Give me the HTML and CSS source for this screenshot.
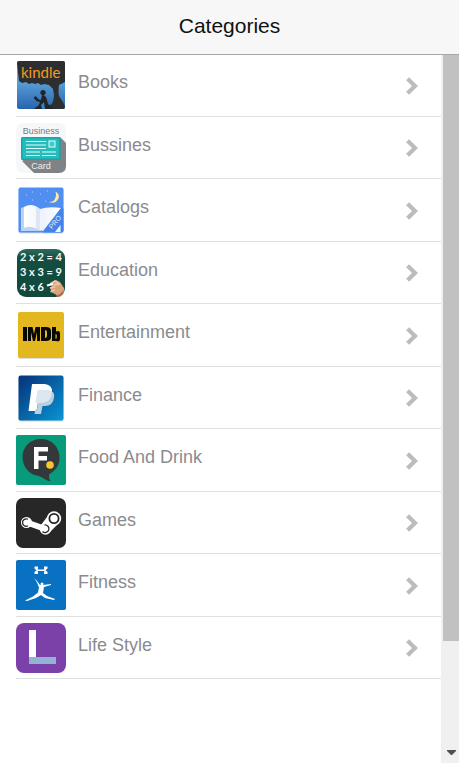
FILE: index.html
```html
<!DOCTYPE html>
<html lang="en">
<head>
<meta charset="utf-8">
<meta name="viewport" content="width=device-width, initial-scale=1">
<title>Categories</title>
<link rel="stylesheet" href="styles.css">
</head>
<body>
<svg class="defs" aria-hidden="true">
  <defs>
    <linearGradient id="dusk" x1="0" y1="0" x2="0" y2="1"><stop offset="0.35" stop-color="#61a7df"/><stop offset="1" stop-color="#2764ad"/></linearGradient>
    <linearGradient id="board" x1="0" y1="0" x2="0" y2="1"><stop offset="0" stop-color="#2c6b5c"/><stop offset="0.2" stop-color="#164d41"/><stop offset="1" stop-color="#10483c"/></linearGradient>
    <linearGradient id="pay" x1="0" y1="0" x2="1" y2="1"><stop offset="0.1" stop-color="#073a80"/><stop offset="1" stop-color="#0896d5"/></linearGradient>
    <linearGradient id="page" x1="0" y1="0" x2="1" y2="0"><stop offset="0" stop-color="#ffffff"/><stop offset="0.5" stop-color="#eef2fa"/><stop offset="1" stop-color="#ffffff"/></linearGradient>
    <symbol id="chevron" viewBox="0 0 12 18"><path d="M1.600 1.700 L9 9 L1.600 16.300" fill="none" stroke="#bcbcbc" stroke-width="4.200"/></symbol>
  </defs>
</svg>
<header class="bar"><h1 class="bar-title">Categories</h1></header>
<div class="view">
  <main class="content">
    <ul class="list">
      <li class="item"><a class="link" href="#books">
        <svg class="icon" viewBox="0 0 50 50" aria-hidden="true">
          <rect x="1" y="1" width="48" height="48" rx="2" fill="url(#dusk)"/>
          <path d="M1 3q0-2 2-2h44q2 0 2 2v19l-4 2-2 1q-1 7 0 11l5 8 1 3q0 2-2 2H27q0-2 4-3l5-2q2-4 2-9l-1-6-4-4-5-1-3 1-3-2-3 1-3-1-3 1-3-2-4 1-3-2z" fill="#2c2e2f"/>
          <circle cx="27" cy="32.500" r="2.600" fill="#20252a"/>
          <path d="M26 35q4 0 5 5l1 4 5 5H18l5-4 1-3-4-1 1-2 4 1z" fill="#20252a"/>
          <path d="M18.500 37l3 3" stroke="#20252a" stroke-width="2.500"/>
          <path d="M25 45l3-3 1 7h-3z" fill="#397fbd"/>
          <text x="5" y="18" class="kindle">kindle</text>
        </svg><span class="label">Books</span><svg class="chevron"><use href="#chevron"/></svg></a></li>
      <li class="item"><a class="link" href="#bussines">
        <svg class="icon" viewBox="0 0 50 50" aria-hidden="true">
          <rect width="50" height="50" rx="7" fill="#f6f7f8"/>
          <path d="M44 14l6 6v23q0 7-7 7H18L6 38z" fill="#7f8388"/>
          <rect x="5" y="14" width="39.500" height="23" rx="1.500" fill="#10a9aa"/>
          <rect x="6.500" y="15.500" width="36.500" height="20" fill="#26bcbc"/>
          <path d="M10 18.500h20M10 22h20M10 25.500h20M10 29h14M26 29h14M10 32.500h14M26 32.500h14" stroke="#e2ffff" stroke-width="1.200"/>
          <rect x="33" y="18" width="6" height="6" fill="#3ccaca" stroke="#e2ffff"/>
          <text x="25" y="10.500" class="biz biz-top">Business</text>
          <text x="25" y="46" class="biz biz-card">Card</text>
        </svg><span class="label">Bussines</span><svg class="chevron"><use href="#chevron"/></svg></a></li>
      <li class="item"><a class="link" href="#catalogs">
        <svg class="icon" viewBox="0 0 50 50" aria-hidden="true">
          <rect x="2.500" y="3.500" width="45" height="45" rx="2" fill="#cfdbef"/>
          <rect x="2.500" y="2.500" width="45" height="45" rx="2" fill="#508ff1"/>
          <path d="M39.500 6.500q4.500 2.500 3 7-3 6-10 3.500 6 0 7-4.500 1-3 0-6z" fill="#ffe9a8"/>
          <path d="M5 23l3-1v21q8-2 17 2v1H5z" fill="#bdd3f8"/>
          <path d="M8 22q8-5 16 2 9-3 21-1L27 46l-3-1q-8-4-16-2z" fill="url(#page)"/>
          <path d="M24 24v21l-4-2V22z" fill="#dfe6f3"/>
          <path d="M46 22l1.500 2v21.500q0 2-2 2H27z" fill="#4483ea"/>
          <path d="M44.500 40v7H39z" fill="#f5f8ff"/>
          <path d="M10 10h1M16 7h1M24 9h1M31 6h1M16 15h1M29 16h1" stroke="#b5d1ff"/>
          <text x="36" y="44.500" transform="rotate(-50 36 44.500)" class="pro">PRO</text>
        </svg><span class="label">Catalogs</span><svg class="chevron"><use href="#chevron"/></svg></a></li>
      <li class="item"><a class="link" href="#education">
        <svg class="icon" viewBox="0 0 50 50" aria-hidden="true">
          <rect x="1" y="1" width="48" height="48" rx="9" fill="url(#board)"/>
          <text class="chalk" x="4" y="13">2 x 2 = 4</text>
          <text class="chalk" x="4" y="28">3 x 3 = 9</text>
          <text class="chalk" x="4" y="43">4 x 6</text>
          <path d="M34 36l6-4 4 2 4 6v5q-2 4-6 4-2-3-5-4l-3-1 1-2-1-2 2-2z" fill="#d9a27d"/>
          <path d="M34 36l5-3 4 3-5 1M34 40l5-1M35 43l4-1" fill="none" stroke="#f2cbaa" stroke-width="1.500"/>
          <path d="M40 48q5-2 8-6 0 5-6 7z" fill="#9c6a4e"/>
          <path d="M31 37.500l6-1.500" stroke="#fff" stroke-width="2"/>
        </svg><span class="label">Education</span><svg class="chevron"><use href="#chevron"/></svg></a></li>
      <li class="item"><a class="link" href="#entertainment">
        <svg class="icon" viewBox="0 0 50 50" aria-hidden="true">
          <rect x="2" y="3" width="46" height="46" rx="2" fill="#dedede"/>
          <rect x="2" y="2" width="46" height="46" rx="2" fill="#e3b71f"/>
          <path fill-rule="evenodd" d="M7 17h4v14H7zM12 17h4.500l1.500 7 1.500-7H24v14h-3v-9l-2 9h-2l-2-9v9h-3zM25 17h5q5 0 5 4v6q0 4-5 4h-5zM29 20v8q2 0 2-2v-4q0-2-2-2zM36 17h4v4.500q4-1.500 4 2V29q0 3.500-4 2H36zM39.500 24v5q1.200 0 1.200-1v-3q0-1-1.200-1z" fill="#080804"/>
        </svg><span class="label">Entertainment</span><svg class="chevron"><use href="#chevron"/></svg></a></li>
      <li class="item"><a class="link" href="#finance">
        <svg class="icon" viewBox="0 0 50 50" aria-hidden="true">
          <rect x="2.500" y="3.500" width="45" height="45" rx="2" fill="#cddbe6"/>
          <rect x="2.500" y="2.500" width="45" height="45" rx="2" fill="url(#pay)"/>
          <path d="M16 11h13q7.500 1 7 8-1 10-10 10.500h-4L20.500 38h-8z" fill="#fff"/>
          <path d="M21.500 18.500q0-1 1.500-1h10q6 .5 5 7-1 8.500-9 8.500h-2.500L25 41h-6.500l1-5h1.500l1-6h-2z" fill="#b7cfe0"/>
          <path d="M21.500 18.500q0-1 1.500-1h10q2 0 3 1-.5 11-10 11.500h-6.500z" fill="#dce7f0"/>
        </svg><span class="label">Finance</span><svg class="chevron"><use href="#chevron"/></svg></a></li>
      <li class="item"><a class="link" href="#food-and-drink">
        <svg class="icon" viewBox="0 0 50 50" aria-hidden="true">
          <rect width="50" height="50" rx="2" fill="#079b7b"/>
          <path d="M25 4C14 4 6.500 12 6.500 22c0 11 8 18 16 19 4 1 6 4 12 5.500q-2-3-1.500-7C39 36 43.500 31 43.500 23 43.500 12 36 4 25 4z" fill="#34383a"/>
          <path d="M18 12h14v4.500h-9.500V21H31v4.500h-8.500V34H18z" fill="#fff"/>
          <circle cx="34" cy="30" r="3.800" fill="#fdc52f"/>
        </svg><span class="label">Food And Drink</span><svg class="chevron"><use href="#chevron"/></svg></a></li>
      <li class="item"><a class="link" href="#games">
        <svg class="icon" viewBox="0 0 50 50" aria-hidden="true">
          <rect width="50" height="50" rx="7" fill="#272727"/>
          <path d="M11 24.500l17 6" fill="none" stroke="#fff" stroke-width="6"/>
          <path d="M31 19l-6 8 9 7 9-9z" fill="#fff"/>
          <circle cx="10.500" cy="24.500" r="5.500" fill="#fff"/>
          <circle cx="29.500" cy="31" r="5.800" fill="#fff"/>
          <circle cx="38" cy="20.500" r="7.200" fill="#fff"/>
          <circle cx="38" cy="20.500" r="4.600" fill="#fff" stroke="#272727" stroke-width="1.800"/>
          <path d="M12 21.300a3.700 3.700 0 1 0 0 6.500M26.500 33.500a3.800 3.800 0 1 0 2-6.500" fill="none" stroke="#272727" stroke-width="1.300"/>
          <path d="M10 24.500l17 6.500" stroke="#fff" stroke-width="4"/>
        </svg><span class="label">Games</span><svg class="chevron"><use href="#chevron"/></svg></a></li>
      <li class="item"><a class="link" href="#fitness">
        <svg class="icon" viewBox="0 0 50 50" aria-hidden="true">
          <rect width="50" height="50" rx="2" fill="#0871c1"/>
          <path d="M18.500 6.500H22v2l-.5 1h7l-.5-1v-2h3.500v2l-2 1.700 2 1.800v2H28v-2l.5-1h-7l.5 1v2h-3.500v-2l2-1.800-2-1.700z" fill="#fff"/>
          <circle cx="26" cy="24" r="1.500" fill="#fff"/>
          <path d="M18 18l3 3 3 4h3l8-1v1l-7 2-1 6 4 3 8 3-1 1-9-2-4-3-5 3-9 3-2-.5 8-4 5-4 1-5-2-5z" fill="#fff"/>
        </svg><span class="label">Fitness</span><svg class="chevron"><use href="#chevron"/></svg></a></li>
      <li class="item"><a class="link" href="#life-style">
        <svg class="icon" viewBox="0 0 50 50" aria-hidden="true">
          <rect width="50" height="50" rx="8" fill="#7c40a9"/>
          <path d="M13 7h7v27h-7z" fill="#fff"/>
          <path d="M13 34h27v7H13z" fill="#95b2d5"/>
        </svg><span class="label">Life Style</span><svg class="chevron"><use href="#chevron"/></svg></a></li>
    </ul>
  </main>
  <div class="scrollbar" aria-hidden="true">
    <div class="thumb"></div>
    <svg class="arrow" viewBox="0 0 9 5"><path d="M0 0h9v1L5 5H4L0 1z" fill="#505050"/></svg>
  </div>
</div>
</body>
</html>
```
FILE: styles.css
```css
* {
  box-sizing: border-box;
}

body {
  display: flex;
  flex-direction: column;
  min-height: 100vh;
  margin: 0;
  background: #fff;
  font-family: "Liberation Sans", Arial, sans-serif;
}

.defs {
  position: absolute;
  width: 0;
  height: 0;
}

.bar {
  z-index: 1;
  display: flex;
  align-items: center;
  justify-content: center;
  height: 54px;
  padding-bottom: 2px;
  background: #f7f7f7;
  box-shadow: 0 1px 0 #a8a8a8;
}

.bar-title {
  margin: 0;
  color: #111;
  font-size: 21px;
  font-weight: 400;
  line-height: 24px;
}

.view {
  display: flex;
  flex: 1;
}

.content {
  flex: 1;
}

.list {
  margin: 0;
  padding: 0 0 0 16px;
  list-style: none;
}

.item {
  height: 63px;
  border-bottom: 1px solid #e0e0e0;
}

.item:nth-child(even) {
  height: 62px;
}

.link {
  display: flex;
  align-items: center;
  height: 100%;
  padding-right: 23px;
  color: #8b8b8f;
  text-decoration: none;
}

.icon {
  flex: none;
  width: 50px;
  height: 50px;
}

.label {
  flex: 1;
  padding: 0 12px 6px;
  font-size: 18px;
  line-height: 22px;
}

.chevron {
  flex: none;
  width: 12px;
  height: 18px;
  margin-top: 1px;
}

.scrollbar {
  display: flex;
  flex-direction: column;
  align-items: center;
  justify-content: space-between;
  width: 18px;
  padding: 0 0 8px 2px;
  background: #f0f0f0;
}

.thumb {
  width: 100%;
  height: 587px;
  background: #c1c1c1;
}

.arrow {
  width: 9px;
  height: 5px;
}

.kindle {
  fill: #f39a20;
  font: 15px Lato, sans-serif;
}

.biz {
  font-family: "Liberation Sans", sans-serif;
  text-anchor: middle;
}

.biz-top {
  fill: #777b80;
  font-size: 9px;
}

.biz-card {
  fill: #eee;
  font-size: 9px;
}

.pro {
  fill: #dce9ff;
  font: 7px "Liberation Sans", sans-serif;
}

.chalk {
  fill: #f4faf6;
  font: 700 11px Lato, sans-serif;
}
```
